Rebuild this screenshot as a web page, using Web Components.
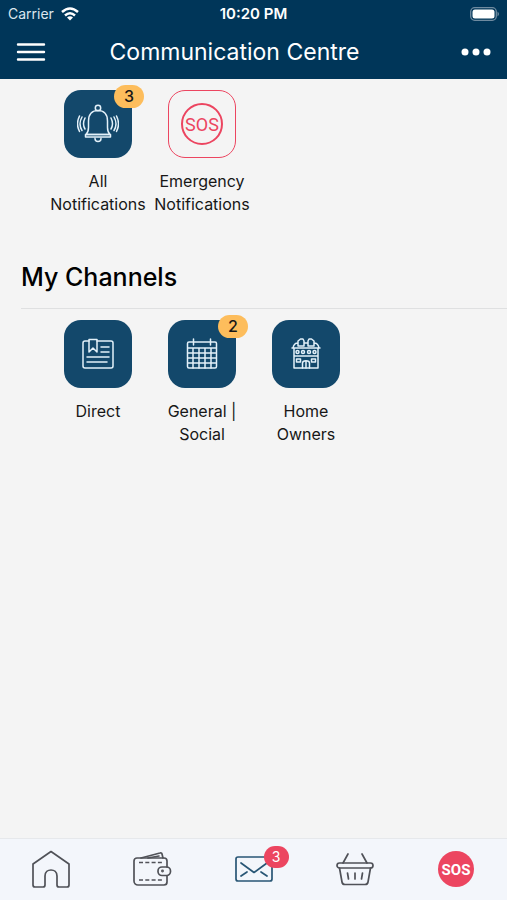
<!DOCTYPE html>
<html lang="en">
<head>
<meta charset="utf-8">
<meta name="viewport" content="width=device-width, initial-scale=1">
<title>Communication Centre</title>
<style>
	:root {
		--header-color: #003659;
		--tile-color: #13486b;
		--alert-color: #ec4560;
		--badge-color: #fdbd5c;
		--icon-color: #505258;
	}

	body {
		margin: 0;
		background: #f4f4f4;
		color: #171717;
		font-family: Inter, "Liberation Sans", sans-serif;
	}
</style>
</head>
<body>
<app-shell>
	<status-bar slot="header" carrier="Carrier" time="10:20 PM"></status-bar>
	<nav-header slot="header">Communication Centre</nav-header>

	<channel-list>
		<channel-tile icon="bell" badge="3">All Notifications</channel-tile>
		<channel-tile icon="sos" outline>Emergency Notifications</channel-tile>
	</channel-list>

	<section-title>My Channels</section-title>

	<channel-list>
		<channel-tile icon="news">Direct</channel-tile>
		<channel-tile icon="calendar" badge="2">General | Social</channel-tile>
		<channel-tile icon="building">Home Owners</channel-tile>
	</channel-list>

	<tab-bar slot="footer">
		<tab-item icon="home" label="Home"></tab-item>
		<tab-item icon="wallet" label="Wallet"></tab-item>
		<tab-item icon="mail" label="Messages" badge="3" active></tab-item>
		<tab-item icon="basket" label="Shop"></tab-item>
		<tab-item icon="sosFilled" label="Emergency"></tab-item>
	</tab-bar>
</app-shell>

<script>
const icons = {
	bell: `
		<svg width="42" height="42" viewBox="0 0 42 42" stroke-width="1.5">
			<circle cx="21" cy="5" r="2.7"/>
			<path d="M9 31.500c2-2 2.500-4 2.500-7V18c0-7 4-10.500 9.500-10.500S30.500 11 30.500 18v6.500c0 3 .5 5 2.500 7z"/>
			<path d="M8.500 31.500h25v2.500h-25zM18 35.500a3 3 0 1 0 6 0"/>
			<path d="M8 15q-3 6 0 11M5 14q-4 7 0 13.500M2.500 13q-4 8 0 15.500M34 15q3 6 0 11M37 14q4 7 0 13.500M39.500 13q4 8 0 15.500"/>
		</svg>`,
	sos: `
		<svg width="44" height="44" viewBox="0 0 44 44" stroke-width="2">
			<circle cx="22" cy="22" r="20"/>
			<text x="22" y="29" font-size="18">SOS</text>
		</svg>`,
	news: `
		<svg width="32" height="32" viewBox="0 0 32 32" stroke-width="1.500">
			<path d="M7 3H3a2 2 0 0 0-2 2v23a2 2 0 0 0 2 2h26a2 2 0 0 0 2-2V5a2 2 0 0 0-2-2H15"/>
			<path d="M7 14V1.500h8V14l-4-4zM19 9h8M19 14h8M5 19h22M5 24h20"/>
		</svg>`,
	calendar: `
		<svg width="32" height="32" viewBox="0 0 32 32" stroke-width="1.500">
			<rect x="1.500" y="4" width="29" height="26" rx="1.500"/>
			<path d="M7.500 1v6M24.500 1v6M2 10h28M2 15h28M2 20h28M2 25h28M7 10v20M13 10v20M19 10v20M25 10v20"/>
		</svg>`,
	building: `
		<svg width="32" height="32" viewBox="0 0 32 32" stroke-width="1.500">
			<path d="M2 10h28M3 10c.5-3 2-5 5-5M29 10c-.5-3-2-5-5-5M14 5h4M8 8V3l2.500-2H13l1 2v5zM18 8V3l1-2h2.500L24 3v5zM4 10v20h24V10M4 18h24"/>
			<path d="M12.500 30v-5c0-3 7-3 7 0v5M16 24v6M6.500 21h4v3h-4zM21.500 21h4v3h-4z"/>
			<circle cx="7.500" cy="14" r="1.500"/><circle cx="13" cy="14" r="1.500"/>
			<circle cx="19" cy="14" r="1.500"/><circle cx="24.500" cy="14" r="1.500"/>
		</svg>`,
	home: `
		<svg width="40" height="40" viewBox="0 0 40 40" stroke-width="1.700">
			<path d="M20 2.500 2 15v21a2 2 0 0 0 2 2h8a2 2 0 0 0 2-2v-9c0-8 12-8 12 0v9a2 2 0 0 0 2 2h8a2 2 0 0 0 2-2V15z"/>
		</svg>`,
	wallet: `
		<svg width="40" height="40" viewBox="0 0 40 40" stroke-width="1.700">
			<path d="M35 18v-6a3 3 0 0 0-3-3H5a3 3 0 0 0-3 3v20a4 4 0 0 0 4 4h26a3 3 0 0 0 3-3v-6"/>
			<path d="m9 9 19-5a1.500 1.500 0 0 1 2 1l1 4M16 9l11-2"/>
			<rect x="26" y="18" width="12.500" height="8.500" rx="4"/>
			<circle cx="30.500" cy="22" r=".6"/>
			<path d="M7 13.500h23M7 31h23" stroke-linecap="butt" stroke-dasharray="4 2.300"/>
		</svg>`,
	mail: `
		<svg width="40" height="40" viewBox="0 0 40 40" stroke-width="1.700">
			<rect x="2" y="8" width="36" height="24" rx="2"/>
			<path d="m7 14 13 9.500L33 14M7 27l6-4M33 27l-6-4"/>
		</svg>`,
	basket: `
		<svg width="40" height="40" viewBox="0 0 40 40" stroke-width="1.700">
			<rect x="2" y="14" width="36" height="5" rx="2.500"/>
			<path d="m4.500 19 2.500 14a3 3 0 0 0 3 2.500h20a3 3 0 0 0 3-2.500l2.500-14M8 14l5-9M32 14l-5-9M12.500 24l1 6M20 24v6M27.500 24l-1 6"/>
		</svg>`,
	sosFilled: `
		<svg width="40" height="40" viewBox="0 0 40 40">
			<circle cx="20" cy="20" r="18" fill="#ec4560" stroke="none"/>
			<text x="20" y="26" font-size="15" font-weight="700" style="fill: #fff">SOS</text>
		</svg>`
};

const iconStyles = `
	svg {
		display: block;
		fill: none;
		stroke: currentColor;
		stroke-linecap: round;
		stroke-linejoin: round;
	}

	svg text {
		fill: currentColor;
		stroke: none;
		font-family: "Liberation Sans Narrow", Roboto, sans-serif;
		text-anchor: middle;
	}
`;


class AppShell extends HTMLElement {
	constructor() {
		super();
		this.attachShadow({ mode: 'open' });
		this.shadowRoot.innerHTML = `
			<style>
				:host {
					display: flex;
					flex-direction: column;
					min-height: 100vh;
				}

				header {
					background: var(--header-color);
					color: #fff;
				}

				main {
					flex: 1;
				}
			</style>

			<header><slot name="header"></slot></header>
			<main><slot></slot></main>
			<slot name="footer"></slot>
		`;
	}
}


class StatusBar extends HTMLElement {
	constructor() {
		super();
		this.attachShadow({ mode: 'open' });
	}

	connectedCallback() {
		this.shadowRoot.innerHTML = `
			<style>
				:host {
					display: grid;
					grid-template-columns: 1fr auto 1fr;
					align-items: center;
					height: 27px;
					padding: 0 8px;
					font-size: 14px;
				}

				.carrier {
					display: flex;
					align-items: center;
					gap: 7px;
					color: #dce6ee;
				}

				.time {
					font-size: 15px;
					font-weight: 600;
				}

				.battery {
					justify-self: end;
				}
			</style>

			<span class="carrier">${this.getAttribute('carrier')}
				<svg width="18" height="14" viewBox="0 0 18 14" fill="none" stroke="#fff" stroke-width="2.500">
					<path d="M1 5q8-7 16 0M4 8.500q5-4.500 10 0"/>
					<path d="m9 13.500-3-3q3-2.500 6 0z" fill="#fff" stroke="none"/>
				</svg>
			</span>
			<span class="time">${this.getAttribute('time')}</span>
			<svg class="battery" width="29" height="14" viewBox="0 0 29 14">
				<rect x=".7" y=".7" width="25.600" height="12.600" rx="4" fill="none" stroke="#6f8ba0" stroke-width="1.300"/>
				<rect x="2.500" y="2.500" width="22" height="9" rx="2.500" fill="#fff"/>
				<path d="M27.500 4.500q3 2.500 0 5z" fill="#6f8ba0"/>
			</svg>
		`;
	}
}


class NavHeader extends HTMLElement {
	constructor() {
		super();
		this.attachShadow({ mode: 'open' });
		this.shadowRoot.innerHTML = `
			<style>
				:host {
					display: flex;
					align-items: center;
					justify-content: space-between;
					padding: 11px 16px 13px;
				}

				h1 {
					margin: 0;
					padding-right: 38px;
					font-size: 23px;
					line-height: 28px;
					font-weight: 400;
				}

				button {
					display: flex;
					padding: 0;
					border: 0;
					background: none;
					color: inherit;
					cursor: pointer;
				}
			</style>

			<button type="button" aria-label="Menu">
				<svg width="30" height="20" viewBox="0 0 30 20" stroke="currentColor" stroke-width="2.400" stroke-linecap="round">
					<path d="M2 2.500h26M2 10h26M2 17.500h26"/>
				</svg>
			</button>
			<h1><slot></slot></h1>
			<button type="button" aria-label="More options">
				<svg width="30" height="8" viewBox="0 0 30 8" fill="currentColor">
					<circle cx="4" cy="4" r="3.500"/><circle cx="15" cy="4" r="3.500"/><circle cx="26" cy="4" r="3.500"/>
				</svg>
			</button>
		`;
	}
}


class SectionTitle extends HTMLElement {
	constructor() {
		super();
		this.attachShadow({ mode: 'open' });
		this.shadowRoot.innerHTML = `
			<style>
				:host {
					display: block;
					margin: 45px 0 0 21px;
					padding-bottom: 15px;
					border-bottom: 1px solid #dfe0e1;
					color: #000;
				}

				h2 {
					margin: 0;
					font-size: 25px;
					line-height: 32px;
					font-weight: 500;
				}
			</style>

			<h2><slot></slot></h2>
		`;
	}
}


class ChannelList extends HTMLElement {
	constructor() {
		super();
		this.attachShadow({ mode: 'open' });
		this.shadowRoot.innerHTML = `
			<style>
				:host {
					display: flex;
					flex-wrap: wrap;
					padding: 11px 46px 0;
				}
			</style>

			<slot></slot>
		`;
	}
}


class ChannelTile extends HTMLElement {
	constructor() {
		super();
		this.attachShadow({ mode: 'open' });
	}

	connectedCallback() {
		const badge = this.getAttribute('badge');
		this.shadowRoot.innerHTML = `
			<style>
				:host {
					display: block;
					width: 104px;
				}

				a {
					display: flex;
					flex-direction: column;
					align-items: center;
					gap: 12px;
					color: inherit;
					text-decoration: none;
				}

				.tile {
					position: relative;
					display: grid;
					place-items: center;
					box-sizing: border-box;
					width: 68px;
					height: 68px;
					border-radius: 17px;
					background: var(--tile-color);
					color: #e3f1fa;
				}

				:host([outline]) .tile {
					border: 1px solid var(--alert-color);
					background: none;
					color: var(--alert-color);
				}

				.badge {
					position: absolute;
					top: -5px;
					right: -12px;
					width: 30px;
					border-radius: 12px;
					background: var(--badge-color);
					color: #171717;
					font-size: 16px;
					font-weight: 500;
					line-height: 23px;
					text-align: center;
				}

				.label {
					width: 96px;
					font-size: 16px;
					line-height: 23px;
					text-align: center;
				}

				${iconStyles}
			</style>

			<a href="#">
				<span class="tile">
					${icons[this.getAttribute('icon')]}
					${badge ? `<span class="badge">${badge}</span>` : ''}
				</span>
				<span class="label"><slot></slot></span>
			</a>
		`;
	}
}


class TabBar extends HTMLElement {
	constructor() {
		super();
		this.attachShadow({ mode: 'open' });
		this.shadowRoot.innerHTML = `
			<style>
				:host {
					display: block;
					position: sticky;
					bottom: 0;
					border-top: 1px solid #e6e8eb;
					background: #f3f6fb;
				}

				nav {
					display: flex;
				}
			</style>

			<nav><slot></slot></nav>
		`;
	}
}


class TabItem extends HTMLElement {
	constructor() {
		super();
		this.attachShadow({ mode: 'open' });
	}

	connectedCallback() {
		const badge = this.getAttribute('badge');
		this.shadowRoot.innerHTML = `
			<style>
				:host {
					flex: 1;
					color: var(--icon-color);
				}

				:host([active]) {
					color: #285675;
				}

				a {
					display: flex;
					justify-content: center;
					padding: 10px 0 11px;
					color: inherit;
				}

				.icon {
					position: relative;
				}

				.badge {
					position: absolute;
					top: -3px;
					right: -15px;
					width: 25px;
					border-radius: 12px;
					background: var(--alert-color);
					color: #fff;
					font-size: 14px;
					line-height: 22px;
					text-align: center;
				}

				${iconStyles}
			</style>

			<a href="#" aria-label="${this.getAttribute('label')}">
				<span class="icon">
					${icons[this.getAttribute('icon')]}
					${badge ? `<span class="badge">${badge}</span>` : ''}
				</span>
			</a>
		`;
	}
}


customElements.define('app-shell', AppShell);
customElements.define('status-bar', StatusBar);
customElements.define('nav-header', NavHeader);
customElements.define('section-title', SectionTitle);
customElements.define('channel-list', ChannelList);
customElements.define('channel-tile', ChannelTile);
customElements.define('tab-bar', TabBar);
customElements.define('tab-item', TabItem);
</script>
</body>
</html>
